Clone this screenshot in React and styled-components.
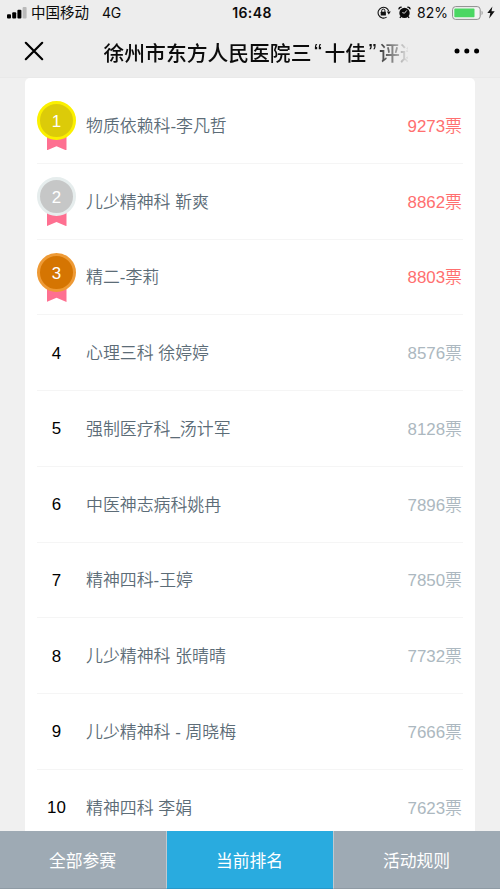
import React from 'react'
import styled, { createGlobalStyle } from 'styled-components'

const ranking = [
    { name: '物质依赖科-李凡哲', votes: 9273 },
    { name: '儿少精神科 靳爽', votes: 8862 },
    { name: '精二-李莉', votes: 8803 },
    { name: '心理三科 徐婷婷', votes: 8576 },
    { name: '强制医疗科_汤计军', votes: 8128 },
    { name: '中医神志病科姚冉', votes: 7896 },
    { name: '精神四科-王婷', votes: 7850 },
    { name: '儿少精神科 张晴晴', votes: 7732 },
    { name: '儿少精神科 - 周晓梅', votes: 7666 },
    { name: '精神四科 李娟', votes: 7623 },
]

const medals = [
    { ring: '#fbf000', face: '#dccb09' },
    { ring: '#e6eded', face: '#c6c7c7' },
    { ring: '#ee9a35', face: '#d57502' },
]

const tabs = ['全部参赛', '当前排名', '活动规则']

const Signal = () => (
    <svg width="20" height="12" viewBox="0 0 20 12">
        <rect x="0" y="7.2" width="4" height="4.3" rx="1" fill="#000" />
        <rect x="5.2" y="5.2" width="4" height="6.3" rx="1" fill="#000" />
        <rect x="10.4" y="2.8" width="4" height="8.7" rx="1" fill="#000" />
        <rect x="15.6" y="0" width="4" height="11.5" rx="1" fill="#b9b9b9" />
    </svg>
)

const RotationLock = () => (
    <svg width="14" height="13" viewBox="0 0 14 13" fill="none">
        <path d="M9.6 11.1A5.4 5.4 0 1 1 11.7 5.2" stroke="#111" strokeWidth="1.1" />
        <path d="M9.8 5.6h4l-2 2.8z" fill="#111" />
        <path d="M4.7 6V4.7a1.6 1.6 0 0 1 3.2 0V6" stroke="#111" strokeWidth="1" />
        <rect x="3.7" y="5.7" width="5.2" height="3.9" rx=".5" fill="#111" />
    </svg>
)

const Alarm = () => (
    <svg width="13" height="13" viewBox="0 0 13 13" fill="none">
        <circle cx="6.5" cy="6.9" r="5.2" fill="#0b0b0b" />
        <path d="M1 3.4A2 2 0 0 1 3.7 1.3M12 3.4A2 2 0 0 0 9.3 1.3" stroke="#0b0b0b" strokeWidth="1.4" />
        <path d="M2.9 10.5l-1 1.4M10.1 10.5l1 1.4" stroke="#0b0b0b" strokeWidth="1.3" />
        <path d="M8.8 4.4L6.5 7.2 4.3 6.6" stroke="#eee" strokeWidth=".9" />
    </svg>
)

const Battery = () => (
    <svg width="32" height="14" viewBox="0 0 32 14">
        <rect x=".6" y=".6" width="27.6" height="12.8" rx="3" fill="#f3f3f3" stroke="#8c8c8c" />
        <rect x="2.3" y="2.6" width="20.2" height="8.6" rx=".8" fill="#4bd763" />
        <path d="M29.6 4.8c1.4.6 1.4 3.8 0 4.4z" fill="#8c8c8c" />
    </svg>
)

const Bolt = () => (
    <svg width="8" height="13" viewBox="0 0 8 13">
        <path d="M5.4.4L.3 7h3L2.2 12.6 7.7 5.3H4.5z" fill="#111" />
    </svg>
)

const CloseIcon = () => (
    <svg width="20" height="20" viewBox="0 0 20 20">
        <path d="M1.8 1.8l16.4 16.4M18.2 1.8L1.8 18.2" stroke="#000" strokeWidth="2.2" strokeLinecap="round" />
    </svg>
)

const MoreIcon = () => (
    <svg width="26" height="6" viewBox="0 0 26 6" fill="#000">
        <circle cx="3" cy="3" r="2.5" />
        <circle cx="12.8" cy="3" r="2.5" />
        <circle cx="22.6" cy="3" r="2.5" />
    </svg>
)

const App = () => (
    <Page>
        <GlobalStyle />
        <StatusBar>
            <Carrier>
                <Signal />
                <span>中国移动</span>
                <Network>4G</Network>
            </Carrier>
            <Clock>16:48</Clock>
            <Indicators>
                <RotationLock />
                <Alarm />
                <Percent>82%</Percent>
                <Battery />
                <Bolt />
            </Indicators>
        </StatusBar>
        <NavBar>
            <NavButton aria-label="关闭"><CloseIcon /></NavButton>
            <Title>徐州市东方人民医院三<Quote>“</Quote>十佳<Quote>”</Quote>评选</Title>
            <NavButton aria-label="更多"><MoreIcon /></NavButton>
        </NavBar>
        <Content>
            <Card>
                {ranking.map((item, i) => (
                    <Row key={item.name}>
                        <Rank>
                            {medals[i] ? (
                                <Medal>
                                    <Disc $ring={medals[i].ring} $face={medals[i].face}>{i + 1}</Disc>
                                    <Ribbon />
                                </Medal>
                            ) : <Place>{i + 1}</Place>}
                        </Rank>
                        <Name>{item.name}</Name>
                        <Votes $top={i < 3}>{item.votes}票</Votes>
                    </Row>
                ))}
            </Card>
        </Content>
        <TabBar>
            {tabs.map((tab, i) => (
                <Tab key={tab} $active={i === 1}>{tab}</Tab>
            ))}
        </TabBar>
    </Page>
)

const GlobalStyle = createGlobalStyle`
    *{
        box-sizing: border-box;
    }
    body{
        margin: 0;
        font-family: "Liberation Sans", "Noto Sans CJK SC", sans-serif;
    }
`

const Page = styled.div`
    display: flex;
    flex-direction: column;
    width: 500px;
    height: 889px;
    overflow: hidden;
    background-color: #f0f0f0;
`

const StatusBar = styled.header`
    display: grid;
    grid-template-columns: 1fr auto 1fr;
    align-items: center;
    height: 25px;
    padding: 0 5px 0 7px;
    background-color: #ededed;
    font-family: Inter, "Noto Sans CJK SC", sans-serif;
    font-size: 14px;
    line-height: 25px;
    color: #0b0b0b;
`

const Carrier = styled.div`
    display: flex;
    align-items: center;
    gap: 4px;
    font-size: 14.5px;

    svg{
        flex: none;
    }
`

const Network = styled.span`
    margin-left: 9px;
    font-size: 14px;
    letter-spacing: -0.2px;
`

const Clock = styled.div`
    padding-left: 2px;
    font-weight: 600;
    font-size: 14px;
    letter-spacing: 0.4px;
`

const Indicators = styled.div`
    display: flex;
    align-items: center;
    justify-content: flex-end;

    svg{
        flex: none;
        margin-left: 7px;
    }
    svg:nth-of-type(3){
        margin-left: 4px;
    }
    svg:nth-of-type(4){
        margin-left: 3px;
    }
`

const Percent = styled.span`
    margin-left: 6px;
    font-size: 14px;
`

const NavBar = styled.nav`
    display: flex;
    align-items: center;
    justify-content: space-between;
    height: 53px;
    padding: 0 20px 0 24px;
    background-color: #ededed;
    border-bottom: #e9e9e9 solid 1px;
`

const NavButton = styled.button`
    display: flex;
    padding: 0;
    border: none;
    background: none;
`

const Title = styled.h1`
    width: 304px;
    margin: 0 0 0 13px;
    padding-top: 1px;
    overflow: hidden;
    white-space: nowrap;
    font-family: "Noto Sans CJK SC", sans-serif;
    font-size: 20.8px;
    font-weight: 500;
    line-height: 32px;
    color: #0b0b0b;
    mask-image: linear-gradient(to right, #000 268px, transparent 306px);
`

const Quote = styled.span`
    display: inline-block;
    width: 13px;
    font-family: "Liberation Sans", sans-serif;
    font-size: 24px;
    line-height: 20px;
    text-align: center;
`

const Content = styled.main`
    flex: 1;
    min-height: 0;
    padding: 0 25px;
    overflow: hidden;
`

const Card = styled.section`
    padding: 10px 12px 0;
    border-radius: 5px 5px 0 0;
    background-color: #fff;
`

const Row = styled.div`
    display: flex;
    align-items: center;
    height: 75.75px;
    border-bottom: #f5f5f5 solid 1px;
    font-size: 16.9px;
    line-height: 24px;
`

const Rank = styled.div`
    flex: none;
    display: flex;
    justify-content: center;
    width: 39px;
    color: #000;
`

const Place = styled.span`
    padding-top: 2px;
`

const Medal = styled.div`
    display: flex;
    flex-direction: column;
    align-items: center;
    margin-top: 1px;
`

const Disc = styled.div`
    z-index: 1;
    width: 39px;
    height: 39px;
    border: ${props => props.$ring} solid 3.5px;
    border-radius: 50%;
    background-color: ${props => props.$face};
    color: #fff;
    line-height: 35px;
    text-align: center;
`

const Ribbon = styled.div`
    width: 20px;
    height: 14px;
    margin-top: -4px;
    background-color: #fe7091;
    clip-path: polygon(0 0, 100% 0, 100% 100%, 50% 70%, 0 100%);
`

const Name = styled.div`
    flex: 1;
    margin-left: 10px;
    padding-top: 3px;
    font-weight: 350;
    color: #5c6c77;
`

const Votes = styled.div`
    margin-right: 1px;
    padding-top: 3px;
    font-weight: 350;
    color: ${props => props.$top ? '#ff6f6f' : '#acb8c0'};
`

const TabBar = styled.footer`
    display: grid;
    grid-template-columns: 166px 167px 1fr;
    height: 58px;
`

const Tab = styled.div`
    display: flex;
    align-items: center;
    justify-content: center;
    padding-right: 1px;
    border-bottom: ${props => props.$active ? '#2798c9' : '#8f9ba5'} solid 1px;
    background-color: ${props => props.$active ? '#29abdf' : '#9eaab4'};
    color: #fff;
    font-size: 16.8px;

    & + &{
        border-left: #c0c9cf solid 1px;
    }
`

export default App
